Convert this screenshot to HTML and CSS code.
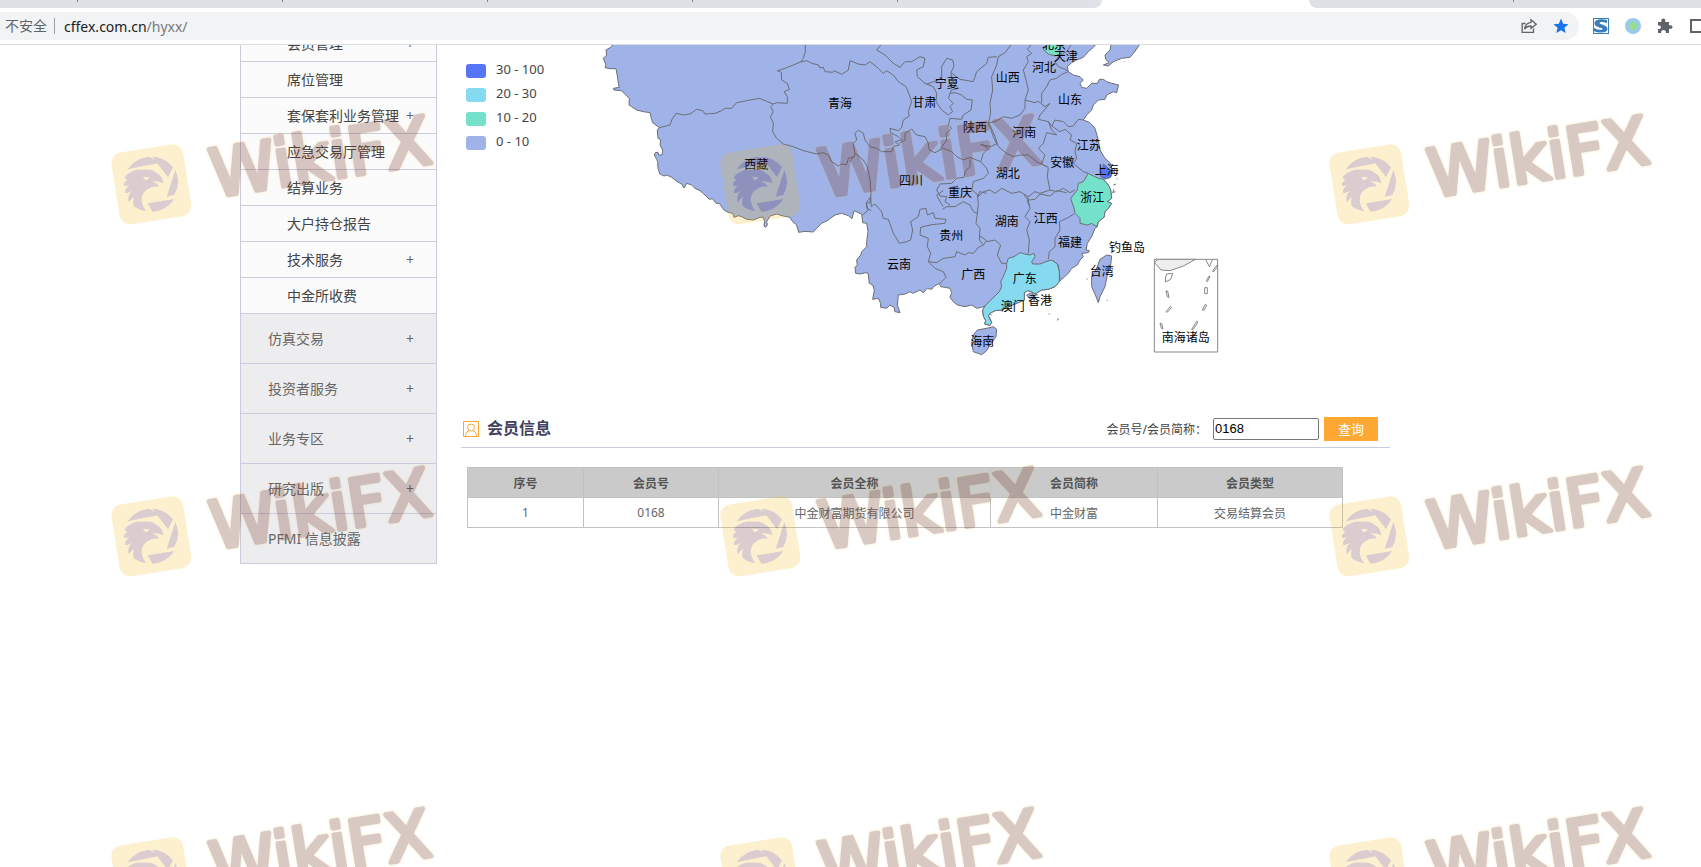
FILE: index.html
```html
<!DOCTYPE html>
<html lang="zh-CN">
<head>
<meta charset="utf-8">
<title>会员信息</title>
<link rel="stylesheet" href="styles.css">
</head>
<body>
<header class="browser">
  <div class="tabs">
    <div class="tabs-left"><i></i><i></i><i></i><i></i><i></i></div>
    <div class="tabs-right"><i></i></div>
  </div>
  <div class="toolbar">
    <div class="omnibox">
      <span class="insecure">不安全</span>
      <span class="url">cffex.com.cn<span class="path">/hyxx/</span></span>
      <svg class="icon" viewBox="0 0 16 16" fill="none" stroke="#5f6368" stroke-width="1.3"><path d="M4.500 5.500H1.200V14.300H12.500V10.500M10 1.800L15.200 6.200L10 10.300V8C7 8 5 9 3.500 11C4 7.500 6 4.800 10 4.300Z"/></svg>
      <svg class="icon" viewBox="0 0 16 16"><path fill="#1a73e8" d="M8 .6L10.100 5.800L15.500 6.200L11.400 9.700L12.700 15.100L8 12.200L3.300 15.100L4.600 9.700L.5 6.200L5.900 5.800Z"/></svg>
    </div>
    <svg class="icon" viewBox="0 0 16 16"><path fill="#3b7db8" d="M0 0H16V16H0Z"/><path fill="#fff" d="M1 1H15V15H1Z"/><path fill="#3b7db8" d="M14 2V5C10 3.500 6.500 3.500 6.500 5C6.500 6.500 14.500 7 14.500 11C14.500 15 6 15.500 1 13V10C5 12 9.500 12.500 9.500 11C9.500 9.500 1.500 9.500 1.500 5.500C1.500 1.500 8 .5 14 2Z"/></svg>
    <svg class="icon" viewBox="0 0 16 16"><circle cx="8" cy="8" r="8" fill="#99caed"/><circle cx="8" cy="8" r="4.200" fill="#98dc92"/></svg>
    <svg class="icon" viewBox="0 0 16 16"><path fill="#5f6368" d="M1 4H4.500C3.800 1.500 5 .6 6.300 .6S8.800 1.500 8.200 4H12V7.300C14.500 6.700 15.500 7.800 15.500 9S14.500 11.300 12 10.700V15H8.800C9.200 12.800 8 12 6.500 12S3.800 12.800 4.200 15H1V11C3 11.300 3.900 10.500 3.900 9.200S3 7.200 1 7.600Z"/></svg>
    <svg class="icon" viewBox="0 0 16 16" fill="none" stroke="#5f6368" stroke-width="2"><path d="M2 2H14V14H2Z"/></svg>
  </div>
</header>

<div class="page">
  <nav class="sidebar" aria-label="服务导航">
    <a class="sub" href="#">会员管理<b>+</b></a>
    <a class="sub" href="#">席位管理</a>
    <a class="sub" href="#">套保套利业务管理<b>+</b></a>
    <a class="sub" href="#">应急交易厅管理</a>
    <a class="sub" href="#">结算业务</a>
    <a class="sub" href="#">大户持仓报告</a>
    <a class="sub" href="#">技术服务<b>+</b></a>
    <a class="sub" href="#">中金所收费</a>
    <a class="top" href="#">仿真交易<b>+</b></a>
    <a class="top" href="#">投资者服务<b>+</b></a>
    <a class="top" href="#">业务专区<b>+</b></a>
    <a class="top" href="#">研究出版<b>+</b></a>
    <a class="top" href="#">PFMI 信息披露</a>
  </nav>

  <main class="content">
    <section class="map-area">
      <ul class="legend">
        <li><i class="c1"></i>30 - 100</li>
        <li><i class="c2"></i>20 - 30</li>
        <li><i class="c3"></i>10 - 20</li>
        <li><i class="c4"></i>0 - 10</li>
      </ul>
      <svg class="map" viewBox="-75 15 2475 1080" role="img" aria-label="会员分布地图">
        <g class="land">
          <path d="M72,10 62,22 48,30 50,45 40,55 48,75 45,83 60,86 78,86 82,108 86,135 88,142 70,145 72,150 95,152 105,163 118,175 117,195 125,200 140,210 160,215 180,218 184,235 188,248 208,263 202,270 204,295 212,300 210,315 218,330 216,345 206,345 204,337 196,338 193,345 200,358 203,365 204,385 210,402 222,408 230,405 245,412 262,425 275,432 282,444 290,430 305,435 315,445 330,452 345,465 358,478 368,476 378,490 388,490 402,510 414,517 428,520 432,532 445,527 455,530 470,538 490,540 510,532 520,532 524,545 522,558 527,562 532,555 530,545 540,528 560,522 580,528 600,532 608,545 620,555 626,577 645,574 670,576 680,565 695,550 715,540 735,525 755,520 775,527 786,536 792,512 805,518 815,522 818,548 830,550 834,575 830,605 830,620 815,635 812,645 800,660 802,675 795,682 797,700 810,702 828,698 834,700 838,730 848,735 853,750 848,778 865,775 872,790 872,802 890,805 900,795 912,802 915,815 930,818 922,795 925,765 945,762 960,755 968,760 990,750 1000,758 1012,745 1025,748 1030,740 1048,730 1052,740 1065,742 1080,745 1085,758 1080,772 1090,785 1102,795 1125,800 1145,795 1160,805 1175,802 1185,798 1178,810 1180,828 1187,842 1184,852 1200,856 1205,848 1200,835 1195,828 1200,820 1215,812 1235,810 1255,800 1280,790 1303,780 1303,758 1312,752 1325,755 1335,762 1355,750 1375,748 1395,740 1408,725 1415,718 1435,700 1445,685 1462,675 1470,660 1480,650 1475,640 1495,638 1498,632 1488,630 1492,610 1505,590 1515,565 1522,560 1525,545 1542,532 1545,515 1555,505 1565,490 1552,485 1565,475 1562,450 1555,435 1540,418 1560,412 1567,398 1565,385 1562,370 1545,355 1530,330 1525,300 1515,265 1500,248 1480,240 1490,225 1505,210 1510,195 1525,180 1545,178 1550,165 1570,155 1580,158 1586,135 1565,130 1550,125 1540,118 1528,118 1522,130 1505,130 1490,145 1475,142 1470,130 1480,120 1470,110 1450,105 1435,95 1432,80 1445,68 1460,60 1480,52 1495,35 1510,22 1525,5Z"/>
          <path d="M1565,5 1560,30 1545,45 1547,58 1557,68 1540,75 1555,78 1570,65 1595,55 1620,52 1632,38 1650,12Z"/>
          <path d="M1565,648 1550,645 1530,658 1520,685 1505,710 1505,740 1515,762 1525,788 1530,770 1545,740 1552,705 1562,675Z"/>
          <path d="M1145,910 1150,885 1162,870 1190,865 1210,860 1220,868 1218,890 1200,915 1190,932 1175,944 1150,935Z"/>
        </g>
        <g class="lines">
          <path d="M208,263 240,255 245,240 258,220 280,225 300,222 320,208 338,212 345,222 375,220 395,212 405,205 425,205 440,188 470,182 508,175 540,188 550,192 560,188 592,190 592,170 582,155 598,148 592,130 575,120 574,97 562,92 585,85 632,66 640,55 646,35 646,10"/>
          <path d="M550,192 542,200 550,215 541,230 550,250 548,275 560,295 580,312 610,320 640,332 680,342 700,338 715,345 725,365 745,378 755,372 770,374 775,355 792,350"/>
        </g>
        <g class="lines" transform="translate(540 0)">
          <path d="M92,66 110,62 125,70 145,75 150,84 160,82 165,95 188,97 192,92 215,103 235,90 240,62 265,72 285,75 300,65 325,85 340,100 350,92 370,105 385,125 408,140 418,165 425,185 415,215 418,228 400,240 395,262 385,272 360,265 362,278 385,290 395,300 375,305 388,315 370,320 365,335 335,335 320,325 300,320 285,300 280,280 265,270 255,280 260,300 250,310 255,345 240,365"/>
          <path d="M335,12 320,30 345,45 370,70 390,82 405,65 425,65 450,50 465,55 460,80 440,90 442,110 465,130 490,140 500,160 498,185 515,210 535,225 548,215 540,200 550,190 535,175 540,160 555,158 575,165 590,178 607,180 603,210 580,225 575,238 540,235 535,255 545,265 528,280 530,300 510,328"/>
          <path d="M470,132 500,122 515,115 515,80 530,55 548,60 552,78 543,98 570,118 610,125 620,95 650,70 655,52 680,50M543,98 545,120 565,145 545,150 540,160"/>
          <path d="M725,12 705,38 685,50 680,75 665,110 668,150 660,190 662,220 655,250 670,290 680,312 660,320 632,313 655,325 640,340 632,365"/>
          <path d="M388,310 405,300 405,280 425,267 440,285 465,290 475,310 478,330 495,338 520,325 545,335 560,350 580,360 600,352 632,365 650,385 655,400 640,415 610,425 605,450 625,465"/>
          <path d="M600,358 600,380 585,395 582,412 560,415 545,430 510,432 500,450 510,468 530,470 525,485 540,495"/>
          <path d="M255,340 280,360 292,380 300,420 303,460 300,488 290,490 290,505 304,512"/>
        </g>
        <g class="lines" transform="translate(1050 0)">
          <path d="M275,12 262,28 275,40 260,50 265,65 250,90 258,120 265,150 255,180 255,205 240,225 215,235 190,230 165,245 147,248 165,290 175,320 200,340 220,350 240,345 265,345 290,365 320,380"/>
          <path d="M255,180 285,188 295,184 315,200 330,190 300,225 295,238 325,245 335,258 345,240 370,245 385,260 400,258 415,238 430,240M305,188 305,160 320,140 330,120 350,115 365,103 385,95"/>
          <path d="M325,245 335,270 350,285 320,278 310,310 295,325 315,345 305,372 325,382 322,410 330,450 300,460 285,455 265,470 240,455 215,460 185,445 165,460 150,450 130,455 115,470"/>
          <path d="M335,258 360,275 375,268 395,285 390,300 410,310 405,335 410,355 400,370 430,395 445,400M330,450 350,455 370,445 390,458 405,450M355,50 345,65 355,80 375,88 385,95M355,50 380,35 395,12"/>
          <path d="M265,470 262,485 270,500"/>
        </g>
        <g class="lines" transform="translate(750 450)">
          <path d="M94,50 92,20 78,40 85,60 68,75M94,50 105,42 125,65 130,85 145,88 160,130 178,160 200,155 212,150 218,120 212,95 235,80 240,58 258,55 262,75 280,68 285,85 318,88 315,100 275,104 242,112 240,135 265,145 262,170 272,190 265,215 285,235 310,245 318,262 300,280"/>
          <path d="M265,215 290,218 310,205 345,200 350,185 375,195 385,188 400,190 415,172 430,165 418,150 420,115 408,100 412,70 400,65 390,45 370,35 345,50 320,50 308,58M310,50 300,35 290,15 310,2M412,70 415,40 412,15M420,138 440,152 430,165M440,155 465,150 482,165 472,195 485,220 500,220"/>
          <path d="M565,190 568,150 560,120 570,95 555,80 570,55 565,30 552,15M625,208 628,185 645,170 645,145 660,120 658,95 680,85 702,72M638,212 655,225 660,268M415,20 418,5 440,10M565,30 585,28 600,12 630,18 650,2 680,8"/>
        </g>
        <g class="guangdong"><path transform="translate(750 450)" d="M435,348 450,332 465,318 478,305 485,290 482,275 490,260 500,235 500,220 505,205 522,200 540,188 555,192 570,195 582,190 585,200 575,215 578,222 600,222 618,215 635,210 652,222 658,245 658,275 645,290 625,298 605,300 585,312 575,305 562,302 553,308 553,330 530,340 505,350 485,360 465,362 450,370 445,378 455,398 450,406 434,402 437,392 430,378 428,360Z"/></g>
        <g class="teal" transform="translate(1050 0)">
          <path d="M445,400 430,425 415,430 412,450 392,475 402,505 405,520 420,535 420,550 442,555 455,550 470,560 475,545 492,532 495,515 505,505 515,490 502,485 515,475 512,450 505,435 490,418 475,415 460,408Z"/>
          <path d="M310,28 325,10 370,8 358,28 365,40 345,48 325,42Z"/>
        </g>
        <path class="shanghai" d="M1538,385 1540,372 1555,385 1567,398 1562,412 1545,417 1532,410 1532,395Z"/>
        <path class="hk" d="M1310,765 1325,758 1335,770 1318,776Z"/>
        <g class="lines">
          <path d="M1570,435 1578,432M1572,448 1568,458 1576,455M1580,415 1582,418M1588,58 1590,60M1602,64 1604,66M1490,716 1493,718M1550,780 1553,782M1376,821 1379,823M1402,836 1406,838 1402,841M1200,820 1205,826"/>
        </g>
        <g class="inset" transform="translate(1230 450)">
          <path d="M463,208H653V486H463Z"/>
          <path class="shade" d="M463,217 475,208 587,208 550,228 510,242 483,240Z"/>
          <path d="M617,208 628,230 638,208M497,260 500,252 518,250 512,268 496,276ZM498,303 503,303 507,323 502,320ZM498,366 511,349 515,352 503,366ZM480,400 485,400 489,417 484,415ZM575,418 590,394 594,396 579,419ZM607,360 616,343 620,345 612,361ZM614,293H622V311H614ZM619,273 627,258 630,260 622,275ZM638,243 650,226 651,232 640,246Z"/>
        </g>
        <g class="names">
          <text x="750" y="203">青海</text><text x="499" y="386">西藏</text><text x="1003" y="201">甘肃</text><text x="1070" y="145">宁夏</text><text x="963" y="434">四川</text><text x="1155" y="275">陕西</text><text x="1110" y="471">重庆</text><text x="1253" y="125">山西</text><text x="1362" y="95">河北</text><text x="1427" y="63">天津</text><text x="1392" y="27">北京</text><text x="1440" y="193">山东</text><text x="1303" y="290">河南</text><text x="1496" y="330">江苏</text><text x="1417" y="380">安徽</text><text x="1550" y="406">上海</text><text x="1253" y="415">湖北</text><text x="1507" y="486">浙江</text><text x="1250" y="558">湖南</text><text x="1367" y="549">江西</text><text x="1084" y="600">贵州</text><text x="927" y="686">云南</text><text x="1150" y="717">广西</text><text x="1304" y="730">广东</text><text x="1350" y="795">香港</text><text x="1268" y="813">澳门</text><text x="1177" y="918">海南</text><text x="1440" y="621">福建</text><text x="1611" y="636">钓鱼岛</text><text x="1535" y="709">台湾</text><text x="1787" y="906">南海诸岛</text>
        </g>
      </svg>
    </section>

    <section class="members">
      <div class="members-head">
        <svg class="icon" viewBox="0 0 16 16" fill="none" stroke="#ffa733"><path d="M.5 .5H15.500V15.500H.5Z"/><circle cx="8" cy="6.500" r="3.500"/><path d="M2.500 15C3 11.500 4.500 9.800 6.500 9.600M9.500 9.600C11.500 9.800 13 11.500 13.500 15"/></svg>
        <h2>会员信息</h2>
        <form class="search">
          <label for="member">会员号/会员简称：</label>
          <input id="member" type="text" value="0168">
          <button type="button">查询</button>
        </form>
      </div>
      <table class="members-table">
        <colgroup><col class="w-no"><col class="w-id"><col class="w-full"><col class="w-short"><col></colgroup>
        <thead><tr><th>序号</th><th>会员号</th><th>会员全称</th><th>会员简称</th><th>会员类型</th></tr></thead>
        <tbody><tr><td>1</td><td>0168</td><td>中金财富期货有限公司</td><td>中金财富</td><td>交易结算会员</td></tr></tbody>
      </table>
    </section>
  </main>
</div>

<div class="watermarks" aria-hidden="true">
  <svg viewBox="0 0 1050 420">
    <defs>
      <g id="eagle">
        <path d="M86,208A84,84 0 0 1 150,170L184,188ZM160,170A83,83 0 0 1 222,202L207,232ZM229,210A83,83 0 0 1 226,285L203,290ZM146,310L226,297A83,83 0 0 1 160,335Z"/>
        <path fill-rule="evenodd" d="M76,232Q100,206 130,209Q160,206 172,218Q190,226 193,250Q180,243 160,244Q174,250 180,260Q160,258 148,266Q128,276 128,300Q130,320 142,334A83,83 0 0 1 104,318Q100,302 106,290Q94,298 90,308Q82,292 98,272Q84,282 78,278Q76,268 90,256Q78,260 74,256Q74,248 84,240ZM132,230L152,232Q146,243 138,239Z"/>
      </g>
      <mask id="cut"><rect width="1050" height="420" fill="#fff"/><use href="#eagle" fill="#000"/></mask>
      <g id="mark">
        <g mask="url(#cut)"><rect class="wm-tile" x="48" y="144" width="218" height="218" rx="32" transform="rotate(-9 157 253)"/></g>
        <use href="#eagle" class="wm-ink"/>
        <g transform="translate(346 292) rotate(-9)">
          <text class="wm-text wm-glow">WikiFX</text>
          <text class="wm-text wm-ink">WikiFX</text>
        </g>
      </g>
    </defs>
    <use href="#mark"/>
  </svg>
  <svg viewBox="0 0 1050 420"><use href="#mark"/></svg>
  <svg viewBox="0 0 1050 420"><use href="#mark"/></svg>
  <svg viewBox="0 0 1050 420"><use href="#mark"/></svg>
  <svg viewBox="0 0 1050 420"><use href="#mark"/></svg>
  <svg viewBox="0 0 1050 420"><use href="#mark"/></svg>
  <svg viewBox="0 0 1050 420"><use href="#mark"/></svg>
  <svg viewBox="0 0 1050 420"><use href="#mark"/></svg>
  <svg viewBox="0 0 1050 420"><use href="#mark"/></svg>
</div>
</body>
</html>
```

FILE: styles.css
```css
* { box-sizing: border-box; }
body {
  margin: 0;
  background: #fff;
  color: #444;
  font-family: "Noto Sans", "Noto Sans CJK SC", sans-serif;
  font-size: 14px;
  height: 100vh;
  overflow: hidden;
}
.icon { width: 16px; height: 16px; flex: none; display: block; }

/* browser chrome */
.browser { border-bottom: 1px solid #dadce0; }
.tabs { display: flex; justify-content: space-between; height: 8px; }
.tabs-left, .tabs-right { background: #dee1e6; display: flex; }
.tabs-left { width: 1102px; border-bottom-right-radius: 8px; padding-left: 77px; gap: 204px; }
.tabs-right { width: 392px; border-bottom-left-radius: 8px; padding-left: 204px; }
.tabs i { width: 1px; height: 2px; background: #80868b; }
.toolbar { display: flex; align-items: center; gap: 16px; height: 36px; margin-right: -4px; }
.omnibox {
  flex: 1;
  display: flex;
  align-items: center;
  height: 28px;
  padding: 0 10px 0 5px;
  margin-right: -2px;
  background: #f1f3f4;
  border-radius: 0 14px 14px 0;
  gap: 16px;
}
.insecure { color: #5f6368; border-right: 1px solid #9aa0a6; line-height: 16px; padding-right: 7px; margin-right: -7px; }
.url { flex: 1; color: #202124; }
.path { color: #757a7f; }

/* page */
.page {
  display: grid;
  grid-template-columns: 197px 1fr;
  gap: 24px;
  padding: 0 311px 0 240px;
  align-items: start;
  overflow: hidden;
}
.sidebar { margin-top: -19px; border: 1px solid #cacbdc; border-width: 0 1px; }
.sidebar a {
  display: flex;
  justify-content: space-between;
  align-items: center;
  border-bottom: 1px solid #cacbdc;
  padding-right: 22px;
  padding-bottom: 2px;
  text-decoration: none;
  white-space: nowrap;
}
.sidebar b { font-weight: 400; color: #666; padding-top: 2px; }
.sub { height: 36px; padding-left: 46px; background: #fbfbfb; color: #444; }
.top { height: 50px; padding-left: 27px; background: #ededf0; color: #666; }

.map-area { display: flex; align-items: flex-start; }
.legend { list-style: none; width: 104px; margin: 0; padding: 12px 0 0 5px; font-size: 13px; white-space: nowrap; }
.legend li { display: flex; align-items: center; gap: 10px; height: 24px; line-height: 24px; }
.legend i { width: 20px; height: 14px; margin-top: 4px; border-radius: 3px; }
.c1 { background: #5475f5; }
.c2 { background: #85daef; }
.c3 { background: #74e2ca; }
.c4 { background: #9fb3e8; }
.map { flex: 1; min-width: 0; display: block; }
.map path { stroke: #6c6f78; stroke-width: 3; stroke-linejoin: round; }
.land path, .hk { fill: #9fb3e8; }
.lines path, .inset path { fill: none; }
.guangdong path { fill: #85daef; }
.teal path { fill: #74e2ca; }
.map .shanghai { fill: #5475f5; }
.inset path { stroke: #888; }
.inset .shade { fill: #eee; }
.names { font-size: 36px; text-anchor: middle; fill: #000; }

.members-head {
  display: flex;
  align-items: center;
  height: 43px;
  padding: 5px 12px 0 2px;
  border-bottom: 1px solid #cacbdc;
}
.members-head h2 { margin: 0 0 0 8px; padding-bottom: 2px; font-size: 16px; font-weight: 700; color: #424161; line-height: 24px; flex: 1; }
.search { display: flex; align-items: center; font-size: 12px; }
.search label { margin-right: 6px; }
.search input {
  width: 106px;
  height: 22px;
  margin-right: 5px;
  padding: 0 1px;
  border: 1px solid #767676;
  border-radius: 2px;
  font: 13px "Liberation Sans", Arial, sans-serif;
  color: #000;
}
.search button {
  width: 54px;
  height: 24px;
  padding: 0;
  border: 0;
  background: #ffa733;
  color: #fff;
  font: 13px "Noto Sans CJK SC", sans-serif;
}
.members-table {
  width: calc(100% - 53px);
  margin: 19px 0 0 6px;
  table-layout: fixed;
  border-collapse: collapse;
  font-size: 12px;
  color: #666;
  text-align: center;
}
.members-table th, .members-table td { height: 30px; padding: 0; border: 1px solid #c2c2c2; }
.members-table th { background: #cacaca; color: #555; font-weight: 700; }
.w-no { width: 116px; }
.w-id { width: 135px; }
.w-full { width: 272px; }
.w-short { width: 167px; }

/* repeated overlay */
.watermarks {
  position: absolute;
  inset: 0;
  overflow: hidden;
  pointer-events: none;
  display: grid;
  grid-template-columns: repeat(3, 609px);
  grid-template-rows: 352px 341px 341px;
  padding: 100px 0 0 99px;
}
.watermarks svg { width: 350px; height: 140px; display: block; overflow: visible; }
.wm-tile { fill: #f0b40f; opacity: .2; }
.wm-ink { fill: #5a1e28; stroke: #5a1e28; opacity: .22; }
use.wm-ink { stroke: none; }
.wm-text { font: 400 198px "DejaVu Sans", sans-serif; stroke-width: 14px; stroke-linejoin: round; }
.wm-glow { fill: none; stroke: #f0c040; stroke-width: 24px; opacity: .07; }
```
